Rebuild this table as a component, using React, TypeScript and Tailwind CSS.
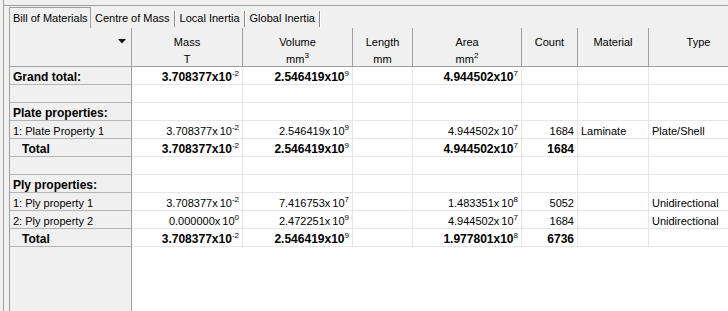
import React from 'react';

type Sci = { m: string; e: string };
type Cell = string | Sci | null;

interface Row {
  label: string;
  bold?: boolean;
  indent?: boolean;
  cells: Cell[];
}

const columns = [
  { name: 'Mass', unit: 'T', sup: '', w: 'w-[111px]' },
  { name: 'Volume', unit: 'mm', sup: '3', w: 'w-[110px]' },
  { name: 'Length', unit: 'mm', sup: '', w: 'w-[60px]' },
  { name: 'Area', unit: 'mm', sup: '2', w: 'w-[109px]' },
  { name: 'Count', unit: '', sup: '', w: 'w-[56px]' },
  { name: 'Material', unit: '', sup: '', w: 'w-[71px]' },
  { name: 'Type', unit: '', sup: '', w: 'w-[100px]' },
];

// numeric columns are right aligned, text columns left aligned
const rightAligned = [true, true, true, true, true, false, false];

const s = (m: string, e: string): Sci => ({ m, e });

const rows: Row[] = [
  {
    label: 'Grand total:',
    bold: true,
    cells: [s('3.708377', '-2'), s('2.546419', '9'), null, s('4.944502', '7'), null, null, null],
  },
  { label: '', cells: [] },
  { label: 'Plate properties:', bold: true, cells: [] },
  {
    label: '1: Plate Property 1',
    cells: [s('3.708377', '-2'), s('2.546419', '9'), null, s('4.944502', '7'), '1684', 'Laminate', 'Plate/Shell'],
  },
  {
    label: 'Total',
    bold: true,
    indent: true,
    cells: [s('3.708377', '-2'), s('2.546419', '9'), null, s('4.944502', '7'), '1684', null, null],
  },
  { label: '', cells: [] },
  { label: 'Ply properties:', bold: true, cells: [] },
  {
    label: '1: Ply property 1',
    cells: [s('3.708377', '-2'), s('7.416753', '7'), null, s('1.483351', '8'), '5052', null, 'Unidirectional'],
  },
  {
    label: '2: Ply property 2',
    cells: [s('0.000000', '0'), s('2.472251', '9'), null, s('4.944502', '7'), '1684', null, 'Unidirectional'],
  },
  {
    label: 'Total',
    bold: true,
    indent: true,
    cells: [s('3.708377', '-2'), s('2.546419', '9'), null, s('1.977801', '8'), '6736', null, null],
  },
];

const tabs = ['Bill of Materials', 'Centre of Mass', 'Local Inertia', 'Global Inertia'];

function Value({ v, bold }: { v: Cell; bold?: boolean }) {
  if (v === null) return null;
  if (typeof v === 'string') return <>{v}</>;
  return (
    <>
      {v.m}x{bold ? '' : <span className="inline-block w-[2px]" />}10
      <sup className="text-[8px] top-[-5px] font-normal">{v.e}</sup>
    </>
  );
}

export default function App() {
  return (
    <div className="w-[728px] h-[311px] overflow-hidden bg-[#f0f0f0] text-black font-['Liberation_Sans',Arial,sans-serif] text-[11px] flex">
      <div className="w-[3px] shrink-0" />
      <div className="flex-1 flex flex-col border-l border-[#a0a0a0] min-w-0">
        <div className="h-[6px] shrink-0 border-b border-[#a0a0a0]" />

        {/* tab strip */}
        <div className="h-[22px] shrink-0 flex items-end pl-[5px]">
          {tabs.map((t, i) =>
            i === 0 ? (
              <div
                key={t}
                className="h-[21px] w-[82px] pl-[3px] flex items-center border-l border-t border-r border-[#a0a0a0] bg-[#f0f0f0] text-[11px] leading-none"
              >
                {t}
              </div>
            ) : (
              <div key={t} className="h-[19px] flex items-center pl-[4px] text-[11px] leading-none">
                <span>{t}</span>
                <span className="ml-[4px] h-[16px] border-l border-[#8a8a8a] border-r border-r-white w-[2px]" />
              </div>
            )
          )}
        </div>

        {/* grid */}
        <div className="flex-1 ml-[5px] border-l border-[#a0a0a0] flex flex-col min-h-0 overflow-hidden">
          {/* header */}
          <div className="flex h-[39px] shrink-0 border-b border-[#a0a0a0]">
            <div className="w-[122px] shrink-0 border-r border-[#a0a0a0] relative">
              <svg width="8" height="5" viewBox="0 0 8 5" className="absolute left-[108px] top-[11px]">
                <path d="M0 0 H8 L4 4.5 Z" fill="#111" />
              </svg>
            </div>
            {columns.map((c) => (
              <div
                key={c.name}
                className={`${c.w} shrink-0 border-r border-[#a0a0a0] flex flex-col items-center pt-[6px] leading-[17px]`}
              >
                <span>{c.name}</span>
                <span>
                  {c.unit}
                  {c.sup && <sup className="text-[8px] top-[-5px]">{c.sup}</sup>}
                </span>
              </div>
            ))}
          </div>

          {/* body rows */}
          {rows.map((r, ri) => (
            <div key={ri} className="flex h-[18px] shrink-0">
              <div
                className={`w-[122px] shrink-0 border-r border-[#a0a0a0] border-b border-b-[#b4b4b4] pt-[3px] leading-[14px] whitespace-nowrap ${
                  r.indent ? 'pl-[12px]' : 'pl-[3px]'
                } ${r.bold ? 'font-bold text-[12px]' : ''}`}
              >
                {r.label}
              </div>
              <div className="flex bg-white">
                {columns.map((c, ci) => (
                  <div
                    key={c.name}
                    className={`${c.w} shrink-0 border-r border-b border-[#e6e6e6] pt-[3px] leading-[14px] whitespace-nowrap ${
                      rightAligned[ci] ? 'text-right pr-[3px]' : 'text-left pl-[3px]'
                    } ${r.bold ? 'font-bold text-[12px]' : ''}`}
                  >
                    <Value v={r.cells[ci] ?? null} bold={r.bold} />
                  </div>
                ))}
              </div>
            </div>
          ))}

          {/* remaining empty space below the rows */}
          <div className="flex flex-1">
            <div className="w-[122px] shrink-0 border-r border-[#a0a0a0]" />
            <div className="flex-1 bg-white" />
          </div>
        </div>
      </div>
    </div>
  );
}
